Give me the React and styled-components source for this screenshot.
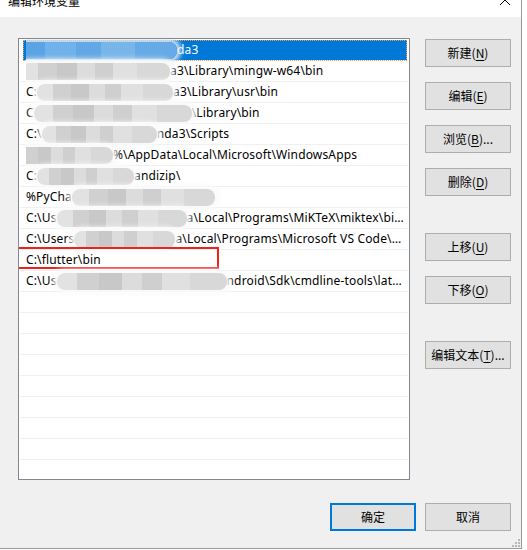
import styled, { createGlobalStyle } from 'styled-components'

const GlobalStyle = createGlobalStyle`
  html, body {
    margin: 0;
    background: #ffffff;
  }
  body {
    font-family: "Noto Sans", "Noto Sans CJK SC", sans-serif;
    font-size: 12px;
    color: #000000;
  }
`

const rows = [
  { pre: '', cut: 169, shift: -18, post: 'da3', selected: true },
  { pre: '', cut: 150, shift: -6, post: 'a3\\Library\\mingw-w64\\bin' },
  { pre: 'C:', cut: 136, post: 'a3\\Library\\usr\\bin' },
  { pre: 'C', cut: 158, post: '\\Library\\bin' },
  { pre: 'C:\\', cut: 115, post: 'nda3\\Scripts' },
  { pre: '', cut: 100, shift: -13, post: '%\\AppData\\Local\\Microsoft\\WindowsApps' },
  { pre: 'C:', cut: 97, post: 'andizip\\' },
  { pre: '%PyCha', cut: 143, post: '' },
  { pre: 'C:\\Us', cut: 130, post: 'a\\Local\\Programs\\MiKTeX\\miktex\\bin\\x64\\' },
  { pre: 'C:\\Users', cut: 101, post: 'a\\Local\\Programs\\Microsoft VS Code\\bin' },
  { pre: 'C:\\flutter\\bin', marked: true },
  { pre: 'C:\\Us', cut: 170, post: 'ndroid\\Sdk\\cmdline-tools\\latest\\bin' },
]

const EMPTY_ROWS = 9

const sideGroups = [
  [
    { label: '新建', key: 'N' },
    { label: '编辑', key: 'E' },
    { label: '浏览', key: 'B', more: true },
    { label: '删除', key: 'D' },
  ],
  [
    { label: '上移', key: 'U' },
    { label: '下移', key: 'O' },
  ],
  [{ label: '编辑文本', key: 'T', more: true }],
]

const CloseIcon = () => (
  <svg width="12" height="12" viewBox="0 0 12 12">
    <path d="M1 1L11 11M11 1L1 11" stroke="#000" strokeWidth="1" fill="none" />
  </svg>
)

const GripIcon = () => (
  <svg width="10" height="10" viewBox="0 0 10 10">
    {[
      [8, 2],
      [5, 5],
      [8, 5],
      [2, 8],
      [5, 8],
      [8, 8],
    ].map(([x, y], i) => (
      <rect key={i} x={x} y={y} width="2" height="2" fill="#b8b8b8" />
    ))}
  </svg>
)

const Label = ({ label, hotkey, more }) => (
  <>
    {label}(<u>{hotkey}</u>){more && '...'}
  </>
)

export default function App() {
  return (
    <>
      <GlobalStyle />
      <Window>
        <TitleBar>
          <Title>编辑环境变量</Title>
          <Close>
            <CloseIcon />
          </Close>
        </TitleBar>
        <Body>
          <Main>
            <List>
              {rows.map((row, i) => (
                <Row key={i} $selected={row.selected} $marked={row.marked}>
                  <RowText>
                    {row.pre}
                    {row.cut && <Smudge $w={row.cut} $shift={row.shift || 0} $blue={row.selected} />}
                    {row.post}
                  </RowText>
                </Row>
              ))}
              {Array.from({ length: EMPTY_ROWS }).map((_, i) => (
                <Row key={'e' + i} />
              ))}
            </List>
            <Side>
              {sideGroups.map((group, gi) => (
                <Group key={gi}>
                  {group.map((b) => (
                    <Button key={b.key}>
                      <Label label={b.label} hotkey={b.key} more={b.more} />
                    </Button>
                  ))}
                </Group>
              ))}
            </Side>
          </Main>
          <Footer>
            <Button $primary>确定</Button>
            <Button>取消</Button>
          </Footer>
          <Grip>
            <GripIcon />
          </Grip>
        </Body>
      </Window>
    </>
  )
}

const Window = styled.div`
  width: 521px;
  height: 548px;
  display: flex;
  flex-direction: column;
  border-right: 1px solid #9a9a9a;
  border-bottom: 1px solid #9a9a9a;
  overflow: hidden;
`

const TitleBar = styled.div`
  height: 17px;
  flex: none;
  background: #ffffff;
  display: flex;
  justify-content: space-between;
  padding: 0 10px 0 8px;
  overflow: hidden;
`

const Title = styled.div`
  font-family: "Noto Sans CJK SC", sans-serif;
  font-size: 12px;
  line-height: 12px;
  margin-top: -5px;
`

const Close = styled.div`
  margin-top: -6px;
  line-height: 0;
`

const Body = styled.div`
  flex: 1;
  background: #f0f0f0;
  padding: 21px 10px 0 18px;
  position: relative;
`

const Main = styled.div`
  display: flex;
  gap: 15px;
`

const List = styled.div`
  border: 1px solid #828790;
  background: #ffffff;
  padding: 1px 1px 0;
  box-sizing: border-box;
  width: 392px;
  height: 442px;
  overflow: hidden;
`

const Row = styled.div`
  height: 20px;
  border-bottom: 1px solid #f0f0f0;
  position: relative;
  background: ${({ $selected }) => ($selected ? '#0078d7' : 'transparent')};
  color: ${({ $selected }) => ($selected ? '#ffffff' : '#000000')};
  margin: ${({ $selected }) => ($selected ? '0 1px 0 3px' : '0')};
  padding: ${({ $selected }) => ($selected ? '0 4px 0 3px' : '0 4px 0 6px')};
  outline: ${({ $selected }) => ($selected ? '1px dotted #f0a050' : 'none')};
  outline-offset: -1px;

  &::after {
    content: '';
    display: ${({ $marked }) => ($marked ? 'block' : 'none')};
    position: absolute;
    left: -3px;
    top: -3px;
    width: 198px;
    height: 18px;
    border: 2px solid #f0211b;
  }
`

const RowText = styled.div`
  line-height: 20px;
  letter-spacing: 0.15px;
  white-space: nowrap;
  overflow-x: clip;
  overflow-y: visible;
  text-overflow: ellipsis;
`

const Smudge = styled.span`
  display: inline-block;
  vertical-align: middle;
  width: ${({ $w }) => $w}px;
  height: 17px;
  margin-left: ${({ $shift }) => $shift}px;
  border-radius: 8px;
  background: ${({ $blue }) =>
    $blue
      ? 'linear-gradient(90deg, #6aaee8 0 10%, #5aa4e4 10% 22%, #71b2ea 22% 40%, #62a8e6 40% 55%, #78b6ea 55% 75%, #66abe7 75% 100%)'
      : 'linear-gradient(90deg, #e2e2e2 0 12%, #d0d0d0 12% 25%, #c8c8c8 25% 38%, #dcdcdc 38% 50%, #cfcfcf 50% 62%, #e0e0e0 62% 78%, #d8d8d8 78% 100%)'};
  box-shadow: 0 0 5px 4px ${({ $blue }) => ($blue ? 'rgba(230,236,242,0.9)' : 'rgba(250,250,250,0.95)')};
  filter: blur(0.6px);
`

const Side = styled.div`
  display: flex;
  flex-direction: column;
  gap: 37px;
  padding-top: 1px;
`

const Group = styled.div`
  display: flex;
  flex-direction: column;
  gap: 15px;
`

const Button = styled.button`
  width: 86px;
  height: 28px;
  box-sizing: border-box;
  font-family: "Noto Sans CJK SC", sans-serif;
  font-size: 12px;
  color: #000000;
  background: #e1e1e1;
  border: ${({ $primary }) => ($primary ? '2px solid #0078d7' : '1px solid #adadad')};
  padding: 0;
  line-height: 1;

  u {
    text-underline-offset: 2px;
  }
`

const Footer = styled.div`
  display: flex;
  justify-content: flex-end;
  gap: 9px;
  margin-top: 23px;
`

const Grip = styled.div`
  position: absolute;
  right: 1px;
  bottom: 1px;
  line-height: 0;
`
